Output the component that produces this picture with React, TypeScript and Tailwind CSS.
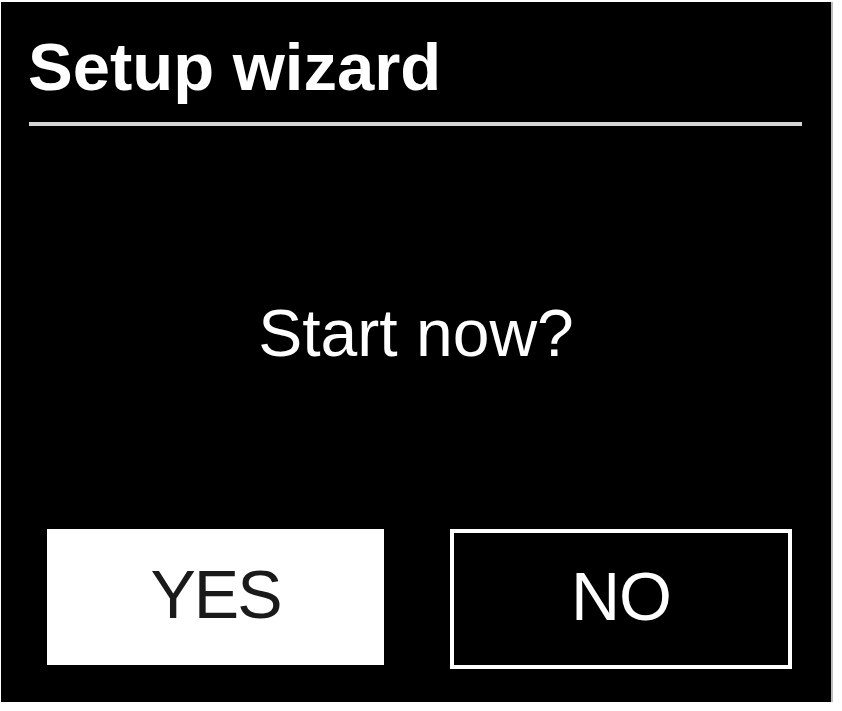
import React from 'react';

// Setup wizard prompt screen
export default function App() {
    return (
        <div className="w-[842px] h-[711px] bg-white pt-[2px] pl-[1px]" style={{ fontFamily: '"Liberation Sans", Arial, sans-serif' }}>
            <div className="w-[832px] h-[700px] bg-black flex flex-col border-r-2 border-[#bdbdbd]">
                {/* Header */}
                <div className="pt-[31px] pl-[27px] text-white font-bold text-[67px] leading-none">
                    Setup wizard
                </div>
                <div className="mt-[22px] ml-[28px] w-[773px] h-[4px] bg-[#d6d6d6]"></div>

                {/* Question */}
                <div className="mt-[174px] text-center text-white text-[66px] leading-none">
                    Start now?
                </div>

                {/* Buttons */}
                <div className="mt-[163px] flex items-start pl-[46px] gap-[66px]">
                    <div className="w-[337px] h-[136px] bg-white flex items-center justify-center pb-[6px] text-[#1a1a1a] text-[68px] leading-none tracking-[-2px]">
                        YES
                    </div>
                    <div className="w-[342px] h-[140px] border-[4px] border-white flex items-center justify-center pb-[6px] text-white text-[68px] leading-none tracking-[-1px]">
                        NO
                    </div>
                </div>
            </div>
        </div>
    );
}
